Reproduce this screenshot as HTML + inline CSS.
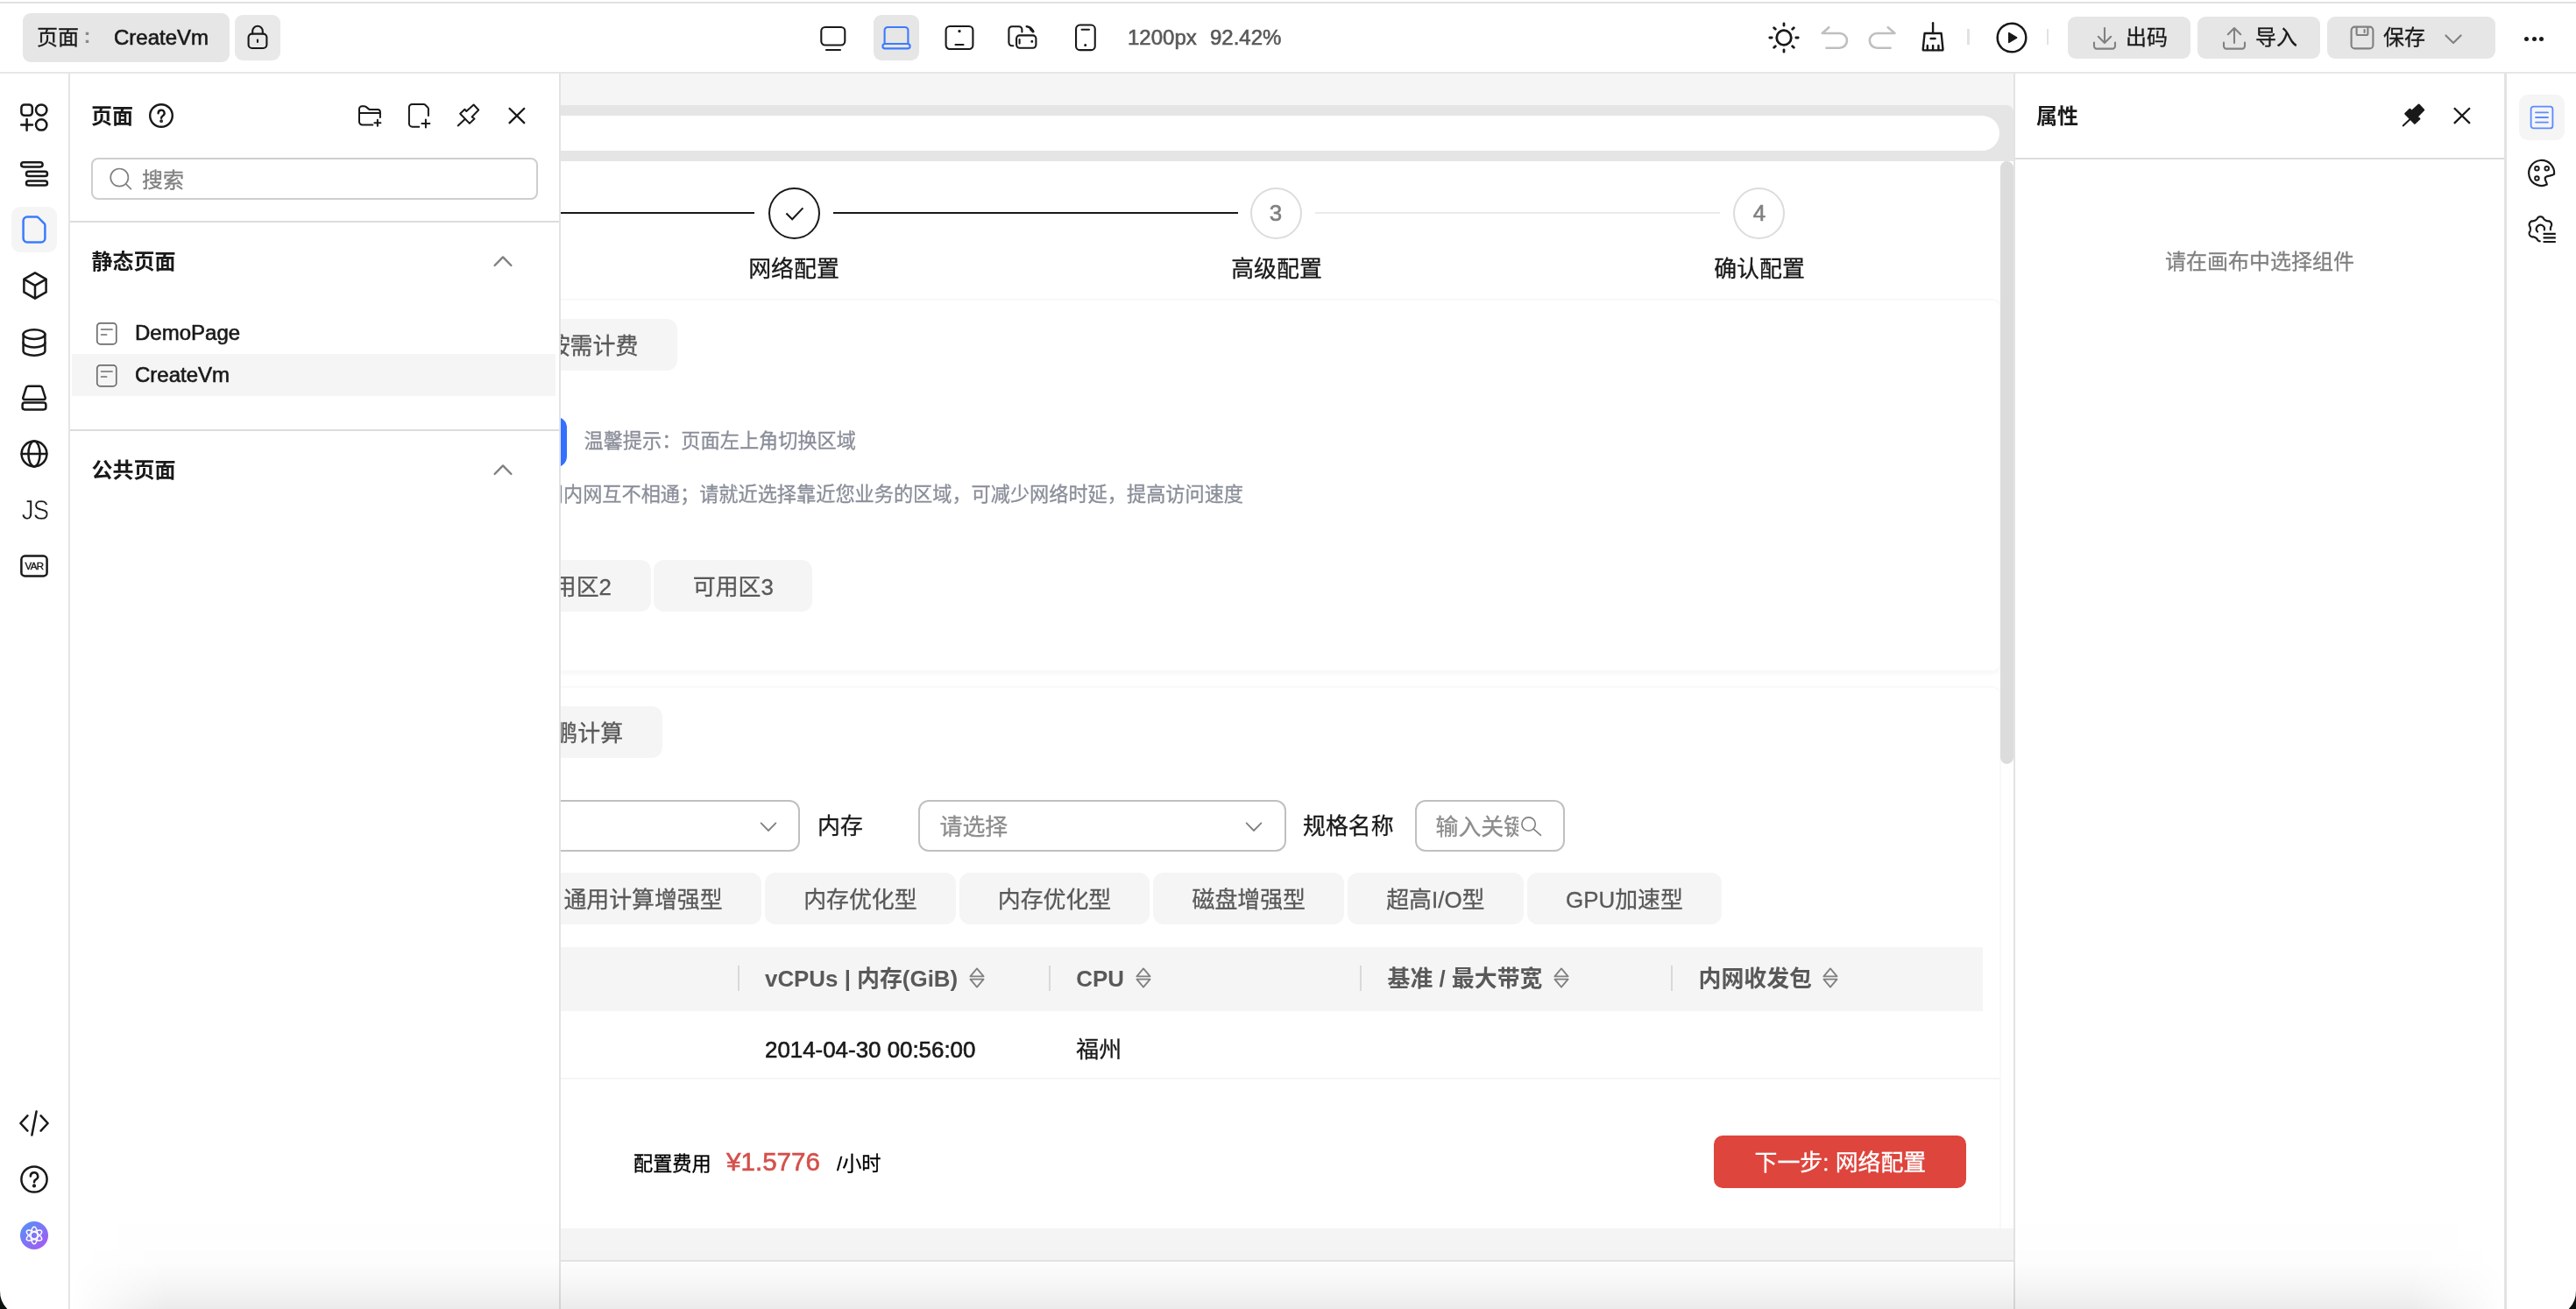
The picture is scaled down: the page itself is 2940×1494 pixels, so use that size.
<!DOCTYPE html>
<html lang="zh-CN">
<head>
<meta charset="utf-8">
<title>TinyEngine - CreateVm</title>
<style>
*{box-sizing:border-box;margin:0;padding:0}
html,body{width:2940px;height:1494px;overflow:hidden;background:#fff}
body{font-family:"Liberation Sans","Noto Sans CJK SC",sans-serif;color:#191919;position:relative;font-size:24px}
.a{position:absolute}
.t{position:absolute;white-space:nowrap;line-height:40px;height:40px}
svg{position:absolute;overflow:visible}
.ic{fill:none;stroke:#191919;stroke-width:2.1;stroke-linecap:round;stroke-linejoin:round}
.t,.gbtn{-webkit-text-stroke:0.3px currentColor}
.b,.th{font-weight:700;-webkit-text-stroke:0 currentColor}
.l{-webkit-text-stroke:0.6px currentColor}
/* toolbar */
#topline{left:0;top:2px;width:2940px;height:2px;background:#e0e1e0}
#tbline{left:0;top:82px;width:2940px;height:2px;background:#e6e6e6}
.tbtn{position:absolute;background:#e6e6e6;border-radius:9px}
/* rail */
#rail .ic{stroke-width:2.5}
#rail{left:0;top:84px;width:78px;height:1410px;background:#fff}
#railline{left:78px;top:84px;width:2px;height:1410px;background:#e5e5e5}
/* panel */
#panel{left:80px;top:84px;width:558px;height:1410px;background:#fff}
#panelline{left:638px;top:84px;width:2px;height:1410px;background:#e3e3e3}
.hl{position:absolute;height:2px;background:#dcdcdc}
/* canvas */
#canvas{left:640px;top:84px;width:1658px;height:1356px;background:#f5f5f5;overflow:hidden}
.cv{font-size:25.9px}
.gbtn{position:absolute;height:59px;background:#f5f5f5;border-radius:12px;color:#595959;font-size:25.9px;line-height:62px;text-align:center;white-space:nowrap}
.sel{position:absolute;height:59px;border:2px solid #c0c0c0;border-radius:12px;background:#fff}
.th{position:absolute;top:997px;height:73px;line-height:73px;font-weight:700;color:#595959;font-size:25.9px;white-space:nowrap}
.sep{position:absolute;top:1018px;width:2px;height:29px;background:#d9d9d9}
/* right */
#rpline{left:2298px;top:84px;width:2px;height:1410px;background:#e3e3e3}
#rpanel{left:2300px;top:84px;width:558px;height:1410px;background:#fff}
#rrline{left:2858px;top:84px;width:3px;height:1410px;background:#e3e3e3}
</style>
</head>
<body>
<div id="root" style="position:absolute;left:0;top:0;width:2940px;height:1494px;will-change:transform">
<!-- ===== canvas ===== -->
<div class="a" id="canvas">
<div class="a" style="left:0;top:36px;width:1658px;height:64px;background:#e5e5e5;border-top-right-radius:8px"></div>
<div class="a" style="left:-60px;top:48px;width:1702px;height:40px;background:#fff;border-radius:20px"></div>
<div class="a" style="left:0;top:100px;width:1658px;height:1218px;background:#fff"></div>
<div class="a" style="left:1643px;top:100px;width:14.800px;height:688px;border-radius:7.400px;background:#dcdcdc;z-index:3"></div>
<!-- steps -->
<div class="a" style="left:-60px;top:158px;width:281px;height:2px;background:#191919"></div>
<div class="a" style="left:237px;top:130px;width:59px;height:59px;border:2px solid #191919;border-radius:50%"></div>
<svg class="ic" style="left:255px;top:151px;stroke-width:2.100" width="24" height="18" viewBox="0 0 24 18"><path d="M2.400 8.600l6.800 6.600L21.400 2.400" stroke-linecap="butt" stroke-linejoin="miter"/></svg>
<div class="a" style="left:311px;top:158px;width:462px;height:2px;background:#191919"></div>
<div class="a" style="left:787.300px;top:129.500px;width:59px;height:59px;border:2px solid #dcdcdc;border-radius:50%"></div>
<div class="t cv l" style="left:786.500px;top:139px;width:59px;text-align:center;color:#808080">3</div>
<div class="a" style="left:861px;top:158px;width:462px;height:2px;background:#ebebeb"></div>
<div class="a" style="left:1337.700px;top:129.500px;width:59px;height:59px;border:2px solid #dcdcdc;border-radius:50%"></div>
<div class="t cv l" style="left:1338.500px;top:139px;width:59px;text-align:center;color:#808080">4</div>
<div class="t cv" style="left:166px;top:202.700px;width:200px;text-align:center">网络配置</div>
<div class="t cv" style="left:717px;top:202.700px;width:200px;text-align:center">高级配置</div>
<div class="t cv" style="left:1268px;top:202.700px;width:200px;text-align:center">确认配置</div>
<!-- card 1 -->
<div class="a" style="left:-60px;top:257px;width:1704px;height:426px;border:2px solid #f9f9f9;border-radius:10px;box-shadow:0 2px 4px rgba(0,0,0,0.030)"></div>
<div class="gbtn" style="left:-60px;top:280px;width:193px">按需计费</div>
<div class="a" style="left:-40px;top:392px;width:47px;height:57px;background:#3370ff;border-radius:12px"></div>
<div class="t" style="left:26.500px;top:399.500px;font-size:22.180px;color:#8a8e99">温馨提示：页面左上角切换区域</div>
<div class="t" style="right:879px;top:460.500px;font-size:22.180px;color:#8a8e99">不同区域的云服务产品之间内网互不相通；请就近选择靠近您业务的区域，可减少网络时延，提高访问速度</div>
<div class="gbtn" style="left:-78.500px;top:554.500px;width:181px">可用区2</div>
<div class="gbtn" style="left:106.400px;top:554.500px;width:181px">可用区3</div>
<!-- card 2 -->
<div class="a" style="left:-60px;top:699px;width:1704px;height:619px;border:2px solid #f9f9f9;border-bottom:none;border-radius:10px 10px 0 0"></div>
<div class="gbtn" style="left:-77px;top:722px;width:192.500px">鲲鹏计算</div>
<div class="sel" style="left:-150px;top:829px;width:423px"></div>
<svg class="ic" style="left:227px;top:853.600px;stroke:#808080;stroke-width:1.800" width="20" height="12" viewBox="0 0 20 12"><path d="M1.600 1.400L10 10l8.400-8.600"/></svg>
<div class="t cv" style="left:293px;top:839px">内存</div>
<div class="sel" style="left:408px;top:829px;width:419.500px"></div>
<div class="t cv" style="left:432.500px;top:840.200px;color:#8c8c8c">请选择</div>
<svg class="ic" style="left:781px;top:853.600px;stroke:#808080;stroke-width:1.800" width="20" height="12" viewBox="0 0 20 12"><path d="M1.600 1.400L10 10l8.400-8.600"/></svg>
<div class="t cv" style="left:847px;top:839px">规格名称</div>
<div class="sel" style="left:974.500px;top:829px;width:171px"></div>
<div class="t cv" style="left:998.500px;top:840.200px;width:94px;overflow:hidden;color:#8c8c8c">输入关键字</div>
<svg class="ic" style="left:1096px;top:846px;stroke:#808080;stroke-width:1.600" width="26" height="26" viewBox="0 0 26 26"><circle cx="8.600" cy="10.600" r="7.700"/><path d="M14.200 16.100l8.300 7.200"/></svg>
<!-- tabs -->
<div class="gbtn" style="left:-41px;top:911.500px;width:270px">通用计算增强型</div>
<div class="gbtn" style="left:233px;top:911.500px;width:217.800px">内存优化型</div>
<div class="gbtn" style="left:454.600px;top:911.500px;width:217.800px">内存优化型</div>
<div class="gbtn" style="left:676.400px;top:911.500px;width:217.800px">磁盘增强型</div>
<div class="gbtn" style="left:898px;top:911.500px;width:200.700px">超高I/O型</div>
<div class="gbtn" style="left:1102.600px;top:911.500px;width:222.700px">GPU加速型</div>
<!-- table -->
<div class="a" style="left:-60px;top:997px;width:1683px;height:73px;background:#f5f5f5"></div>
<div class="sep" style="left:202px"></div><div class="sep" style="left:557px"></div><div class="sep" style="left:912px"></div><div class="sep" style="left:1267px"></div>
<div class="th" style="left:233px">vCPUs | 内存(GiB)</div><svg style="left:465px;top:1020px" width="20" height="24" viewBox="0 0 20 24"><path d="M10 1.400L17.600 10.400H2.400z" fill="none" stroke="#808080" stroke-width="1.800" stroke-linejoin="round"/><path d="M10 22.600L17.600 13.600H2.400z" fill="none" stroke="#808080" stroke-width="1.800" stroke-linejoin="round"/></svg>
<div class="th" style="left:588.300px">CPU</div><svg style="left:654.5px;top:1020px" width="20" height="24" viewBox="0 0 20 24"><path d="M10 1.400L17.600 10.400H2.400z" fill="none" stroke="#808080" stroke-width="1.800" stroke-linejoin="round"/><path d="M10 22.600L17.600 13.600H2.400z" fill="none" stroke="#808080" stroke-width="1.800" stroke-linejoin="round"/></svg>
<div class="th" style="left:943.500px">基准 / 最大带宽</div><svg style="left:1131.5px;top:1020px" width="20" height="24" viewBox="0 0 20 24"><path d="M10 1.400L17.600 10.400H2.400z" fill="none" stroke="#808080" stroke-width="1.800" stroke-linejoin="round"/><path d="M10 22.600L17.600 13.600H2.400z" fill="none" stroke="#808080" stroke-width="1.800" stroke-linejoin="round"/></svg>
<div class="th" style="left:1298.500px">内网收发包</div><svg style="left:1439px;top:1020px" width="20" height="24" viewBox="0 0 20 24"><path d="M10 1.400L17.600 10.400H2.400z" fill="none" stroke="#808080" stroke-width="1.800" stroke-linejoin="round"/><path d="M10 22.600L17.600 13.600H2.400z" fill="none" stroke="#808080" stroke-width="1.800" stroke-linejoin="round"/></svg>
<div class="t cv l" style="left:233px;top:1094px">2014-04-30 00:56:00</div>
<div class="t cv" style="left:588.300px;top:1094px">福州</div>
<div class="a" style="left:-60px;top:1146px;width:1702px;height:2px;background:#f5f5f5"></div>
<!-- footer -->
<div class="t" style="left:83px;top:1225.200px;font-size:22.180px;color:#000">配置费用</div>
<div class="t l" style="left:189px;top:1222px;font-size:29.600px;color:#d4504b">¥1.5776</div>
<div class="t" style="left:315px;top:1225.200px;font-size:22.180px;color:#000">/小时</div>
<div class="a" style="left:1316.300px;top:1212.300px;width:288.200px;height:59.400px;border-radius:10px;background:#de453d"></div>
<div class="t cv" style="left:1316.300px;top:1223.300px;width:288.200px;text-align:center;color:#fff">下一步: 网络配置</div>
<div class="a" style="left:0;top:1354px;width:1658px;height:2px;background:#e4e4e4"></div>
</div>

<!-- ===== toolbar ===== -->
<div class="a" id="toolbar" style="left:0;top:0;width:2940px;height:82px;background:#fff">
<div class="tbtn" style="left:26px;top:15px;width:236px;height:56px"></div>
<div class="t" style="left:42px;top:23px">页面</div>
<div class="t b" style="left:95.500px;top:21px;color:#8a8a8a">:</div>
<div class="t l" style="left:130px;top:23px">CreateVm</div>
<div class="tbtn" style="left:268px;top:17px;width:52px;height:52px;background:#e9e9e9"></div>
<svg class="ic" style="left:281px;top:27px" width="26" height="30" viewBox="0 0 26 30"><rect x="2.6" y="11.6" width="20.8" height="16.4" rx="4"/><path d="M7.2 11.4V8.6a5.8 5.8 0 0 1 11.6 0v2.8"/><path d="M13 18.6v2.4"/></svg>
<!-- device icons -->
<svg class="ic" style="left:934px;top:27px" width="34" height="34" viewBox="0 0 34 34"><rect x="3.3" y="4" width="27" height="20.5" rx="4.5"/><path d="M9 30h16"/></svg>
<div class="tbtn" style="left:997px;top:17px;width:52px;height:52px"></div>
<svg class="ic" style="left:1006px;top:27px;stroke:#3b7bff" width="34" height="34" viewBox="0 0 34 34"><path d="M3.6 23V7.6a3.6 3.6 0 0 1 3.6-3.6h19.6a3.6 3.6 0 0 1 3.6 3.6V23"/><rect x="1.4" y="23" width="31.2" height="5.4" rx="2.7"/></svg>
<svg class="ic" style="left:1078px;top:27px" width="34" height="34" viewBox="0 0 34 34"><rect x="1.6" y="3" width="30.8" height="26" rx="4.5"/><path d="M12.5 24h9"/><circle cx="17" cy="8.6" r="1" fill="#191919" stroke-width="1.4"/></svg>
<svg class="ic" style="left:1150px;top:27px" width="36" height="34" viewBox="0 0 36 34"><path d="M6.400 25.200H5a3.600 3.600 0 0 1-3.600-3.600V6.800A3.600 3.600 0 0 1 5 3.200h7.800a3.600 3.600 0 0 1 3.600 3.600V9.400"/><rect x="10.100" y="13.400" width="22.300" height="14.300" rx="3.600"/><path d="M21.800 3.200a9 9 0 0 1 7 5.200" stroke-width="2.600"/><path d="M26.600 6.400l2.400 2.400" stroke-width="3.200"/><path d="M13.600 18v4.600"/><circle cx="27.800" cy="20.300" r="0.900" fill="#191919" stroke-width="1.200"/></svg>
<svg class="ic" style="left:1222px;top:26px" width="34" height="36" viewBox="0 0 34 36"><rect x="6.050" y="2.550" width="21.700" height="28.600" rx="4.500"/><path d="M12.600 7.800h8.400"/><circle cx="16.700" cy="25.500" r="0.900" fill="#191919" stroke-width="1.200"/></svg>
<div class="t l" style="left:1287px;top:23px;color:#595959">1200px</div>
<div class="t l" style="left:1381px;top:23px;color:#595959">92.42%</div>
<!-- right tools -->
<svg class="ic" style="left:2017px;top:24px;stroke-width:2.800" width="38" height="38" viewBox="0 0 38 38"><circle cx="19" cy="19" r="8.300"/><path d="M19 2.800v2.400M19 32.800v2.400M2.800 19h2.400M32.800 19h2.400M7.700 7.700l1.600 1.600M28.700 28.700l1.600 1.600M7.700 30.300l1.600-1.600M28.700 9.300l1.600-1.600"/></svg>
<svg class="ic" style="left:2077px;top:28px;stroke:#bfbfbf;stroke-width:2.600" width="34" height="30" viewBox="0 0 34 30"><path d="M10.300 3.200L2.700 10H22.600a8.350 8.350 0 0 1 0 16.700H7.500"/></svg>
<svg class="ic" style="left:2131px;top:28px;stroke:#bfbfbf;stroke-width:2.600" width="34" height="30" viewBox="0 0 34 30"><path d="M23.800 3.200L31.500 10H11.200a8.350 8.350 0 0 0 0 16.700H26.600"/></svg>
<svg class="ic" style="left:2191px;top:25px;stroke-width:2.400" width="30" height="36" viewBox="0 0 30 36"><path d="M15.100 1.200V13"/><path d="M5.600 13h19l1.900 18.400a0.900 0.900 0 0 1-0.900 1H4.600a0.900 0.900 0 0 1-0.900-1z"/><path d="M12.600 19h5"/><path d="M8.800 32v-5M15.100 32v-5M21.400 32v-5"/></svg>
<div class="a" style="left:2245px;top:33px;width:2.500px;height:18px;background:#e2e2e2"></div>
<svg class="ic" style="left:2277px;top:24px" width="38" height="38" viewBox="0 0 38 38"><circle cx="19" cy="19" r="16.300" stroke-width="2.500"/><path d="M15.800 13.600v10.800l8.800-5.400z" fill="#191919" stroke-width="1.600"/></svg>
<div class="a" style="left:2335.500px;top:33px;width:2.500px;height:18px;background:#e2e2e2"></div>
<div class="tbtn" style="left:2360px;top:19px;width:140px;height:48px"></div>
<svg class="ic" style="left:2388px;top:30px;stroke:#808080" width="28" height="28" viewBox="0 0 28 28"><path d="M14 2v16.600M6.800 11.800L14 19l7.200-7.200"/><path d="M2 18.600v4a3 3 0 0 0 3 3h18a3 3 0 0 0 3-3v-4"/></svg>
<div class="t" style="left:2426px;top:23px">出码</div>
<div class="tbtn" style="left:2508px;top:19px;width:140px;height:48px"></div>
<svg class="ic" style="left:2536px;top:30px;stroke:#808080" width="28" height="28" viewBox="0 0 28 28"><path d="M14 19V2.400M6.800 9.200L14 2l7.200 7.200"/><path d="M2 18.600v4a3 3 0 0 0 3 3h18a3 3 0 0 0 3-3v-4"/></svg>
<div class="t" style="left:2574px;top:23px">导入</div>
<div class="tbtn" style="left:2656px;top:19px;width:192px;height:48px"></div>
<svg class="ic" style="left:2682px;top:29px;stroke:#808080" width="28" height="28" viewBox="0 0 28 28"><rect x="1.600" y="1.600" width="24.800" height="24.800" rx="4"/><path d="M7.600 2v7.400a1.600 1.600 0 0 0 1.600 1.600h9.600a1.600 1.600 0 0 0 1.600-1.600V2"/><path d="M16.600 5v3"/></svg>
<div class="t" style="left:2720px;top:23px">保存</div>
<svg class="ic" style="left:2790px;top:39px;stroke:#808080" width="20" height="12" viewBox="0 0 20 12"><path d="M1.400 1.400L10 10l8.600-8.600"/></svg>
<div class="a" style="left:2881px;top:42px;width:5px;height:5px;border-radius:3px;background:#191919"></div>
<div class="a" style="left:2889.500px;top:42px;width:5px;height:5px;border-radius:3px;background:#191919"></div>
<div class="a" style="left:2898px;top:42px;width:5px;height:5px;border-radius:3px;background:#191919"></div>
</div>
<div class="a" id="topline"></div>
<div class="a" id="tbline"></div>

<!-- ===== left rail ===== -->
<div class="a" id="rail">
<!-- coordinates relative to rail top (84) -->
<svg class="ic" style="left:22px;top:33px" width="34" height="34" viewBox="0 0 34 34"><rect x="2.400" y="2.400" width="12.400" height="12.400" rx="3.600"/><circle cx="25.200" cy="8.600" r="6.200"/><circle cx="25.200" cy="25.400" r="6.200"/><path d="M8.600 19v12.800M2.200 25.400h12.800"/></svg>
<svg class="ic" style="left:22px;top:98px" width="34" height="32" viewBox="0 0 34 32"><rect x="2.200" y="3.200" width="24.400" height="5.200" rx="2.600"/><rect x="8" y="13.800" width="24" height="5.200" rx="2.600"/><rect x="8" y="24.400" width="24" height="5.200" rx="2.600"/></svg>
<div class="a" style="left:13px;top:152px;width:52px;height:52px;border-radius:10px;background:#f5f5f5"></div>
<svg class="ic" style="left:24px;top:161px;stroke:#3b7bff" width="30" height="34" viewBox="0 0 30 34"><path d="M7 2.600h10.800a3 3 0 0 1 2.100 0.900l6.600 6.600a3 3 0 0 1 0.900 2.100V27a4.400 4.400 0 0 1-4.400 4.400H7A4.400 4.400 0 0 1 2.600 27V7A4.400 4.400 0 0 1 7 2.600z"/></svg>
<svg class="ic" style="left:24px;top:225px" width="32" height="34" viewBox="0 0 32 34"><path d="M16 2.400l12.600 7.200v14.800L16 31.600 3.400 24.400V9.600z"/><path d="M3.800 9.800L16 16.800l12.200-7M16 16.800v14.400"/></svg>
<svg class="ic" style="left:24px;top:290px" width="30" height="34" viewBox="0 0 30 34"><ellipse cx="15" cy="7.600" rx="12.400" ry="5.400"/><path d="M2.600 7.600v18.800c0 3 5.600 5.400 12.400 5.400s12.400-2.400 12.400-5.400V7.600"/><path d="M2.600 17c0 3 5.600 5.400 12.400 5.400s12.400-2.400 12.400-5.400"/></svg>
<svg class="ic" style="left:23px;top:354px" width="32" height="32" viewBox="0 0 32 32"><path d="M9.200 2.800h13.600a2.400 2.400 0 0 1 2.300 1.700l3.600 11.300a1.600 1.600 0 0 1-1.500 2.100H4.800a1.600 1.600 0 0 1-1.500-2.100L6.900 4.500a2.400 2.400 0 0 1 2.300-1.700z"/><rect x="2.600" y="21.600" width="26.800" height="7.800" rx="2.600"/></svg>
<svg class="ic" style="left:22px;top:417px" width="34" height="34" viewBox="0 0 34 34"><circle cx="17" cy="17" r="14.400"/><ellipse cx="17" cy="17" rx="6.600" ry="14.400"/><path d="M2.600 17h28.800"/></svg>
<div class="t" style="left:21px;top:478px;font-size:32px;font-weight:400;letter-spacing:-1px;width:38px;text-align:center;transform:scaleX(0.860);-webkit-text-stroke:0.600px #fff">JS</div>
<svg class="ic" style="left:22px;top:548px" width="34" height="28" viewBox="0 0 34 28"><rect x="2.400" y="2.600" width="29.200" height="22.800" rx="4"/></svg>
<div class="t b" style="left:22px;top:542px;width:34px;text-align:center;font-size:11.500px;letter-spacing:-0.600px;font-weight:400;-webkit-text-stroke:0.400px #191919">VAR</div>
<svg class="ic" style="left:21px;top:1182px" width="36" height="32" viewBox="0 0 36 32"><path d="M10.400 7.400L2.400 16l8 8.600M25.600 7.400l8 8.600-8 8.600M20.600 2.400l-5.200 27.200"/></svg>
<svg class="ic" style="left:22px;top:1245px" width="34" height="34" viewBox="0 0 34 34"><circle cx="17" cy="17" r="14.600"/><path d="M12.800 13.400a4.200 4.200 0 1 1 6.200 3.700c-1.400 0.800-2 1.500-2 3.100"/><circle cx="17" cy="24.400" r="0.800" fill="#191919"/></svg>
<svg style="left:23px;top:1310px" width="32" height="32" viewBox="0 0 32 32"><defs><linearGradient id="aig" x1="0.150" y1="0.100" x2="0.850" y2="0.900"><stop offset="0" stop-color="#5a8df8"/><stop offset="1" stop-color="#a35cf3"/></linearGradient></defs><circle cx="16" cy="16" r="16" fill="url(#aig)"/><g fill="none" stroke="#fff" stroke-width="1.500"><ellipse cx="16" cy="16" rx="3.800" ry="9.800"/><ellipse cx="16" cy="16" rx="3.800" ry="9.800" transform="rotate(60 16 16)"/><ellipse cx="16" cy="16" rx="3.800" ry="9.800" transform="rotate(120 16 16)"/></g></svg>
</div>
<div class="a" id="railline"></div>

<!-- ===== pages panel ===== -->
<div class="a" id="panel">
<div class="t b" style="left:24px;top:28.500px">页面</div>
<svg class="ic" style="left:89px;top:33px;stroke-width:2.400" width="30" height="30" viewBox="0 0 30 30"><circle cx="15" cy="15" r="12.800"/><path d="M11.600 12.200a3.500 3.500 0 1 1 5.200 3c-1.200 0.700-1.700 1.300-1.700 2.600"/><circle cx="15.100" cy="21.200" r="0.700" fill="#191919"/></svg>
<svg class="ic" style="left:328px;top:34px;stroke-width:2" width="30" height="28" viewBox="0 0 30 28"><path d="M17.300 24.600H5.600A3.600 3.600 0 0 1 2 21V6.400a3.200 3.200 0 0 1 3.200-3.200h2.600a3 3 0 0 1 1.900 0.700l3.400 2.700a2.400 2.400 0 0 0 1.500 0.500h8.500a2.800 2.800 0 0 1 2.800 2.800V16"/><path d="M2.200 10.900h23.600"/><path d="M22.900 18.700v7M19.400 22.200h7"/></svg>
<svg class="ic" style="left:385px;top:33px;stroke-width:2" width="28" height="30" viewBox="0 0 28 30"><path d="M13.300 27.700H5.500a3.600 3.600 0 0 1-3.600-3.600V5.500a3.600 3.600 0 0 1 3.600-3.600h13.200a2 2 0 0 1 1.400 0.600l3.200 3.200a2 2 0 0 1 0.600 1.400V14.900"/><path d="M20.900 19.400v9M16.400 23.900h9"/></svg>
<svg class="ic" style="left:441px;top:34px;stroke-width:2" width="28" height="28" viewBox="0 0 28 28"><path d="M1.700 25.400l7.700-7.200"/><path d="M4.200 11.800L9.400 6.700 11.300 9 19.600 1.500 25.200 7.500 17.600 15.400 20.500 17.500 14.900 22.900z"/></svg>
<svg class="ic" style="left:499px;top:37px;stroke-width:2.300" width="22" height="22" viewBox="0 0 22 22"><path d="M1.900 2.200l18 17.700M19.900 2.200L1.900 19.900" stroke-linecap="butt"/></svg>
<div class="a" style="left:24px;top:96px;width:510px;height:48px;border:2px solid #cecece;border-radius:8px"></div>
<svg class="ic" style="left:44px;top:106px;stroke:#808080;stroke-width:1.700" width="28" height="28" viewBox="0 0 28 28"><circle cx="12.300" cy="12.600" r="10.100"/><path d="M19.600 19.900l5.800 5.800"/></svg>
<div class="t" style="left:82px;top:102.300px;color:#808080">搜索</div>
<div class="hl" style="left:0;top:168px;width:558px"></div>
<div class="t b" style="left:24.500px;top:194.500px">静态页面</div>
<svg class="ic" style="left:483px;top:207px;stroke:#808080;stroke-width:2.400" width="22" height="14" viewBox="0 0 22 14"><path d="M1.600 12L11 2.400 20.400 12"/></svg>
<svg class="ic" style="left:29px;top:283px;stroke:#6e6e6e;stroke-width:1.700" width="26" height="28" viewBox="0 0 26 28"><rect x="1.800" y="1.800" width="22" height="24" rx="3.600"/><path d="M6.600 9h12.400M6.600 15h6"/></svg>
<div class="t l" style="left:74px;top:276px">DemoPage</div>
<div class="a" style="left:2px;top:320px;width:552px;height:48px;background:#f5f5f5"></div>
<svg class="ic" style="left:29px;top:331px;stroke:#6e6e6e;stroke-width:1.700" width="26" height="28" viewBox="0 0 26 28"><rect x="1.800" y="1.800" width="22" height="24" rx="3.600"/><path d="M6.600 9h12.400M6.600 15h6"/></svg>
<div class="t l" style="left:74px;top:324px">CreateVm</div>
<div class="hl" style="left:0;top:406px;width:558px"></div>
<div class="t b" style="left:24.500px;top:432.500px">公共页面</div>
<svg class="ic" style="left:483px;top:445px;stroke:#808080;stroke-width:2.400" width="22" height="14" viewBox="0 0 22 14"><path d="M1.600 12L11 2.400 20.400 12"/></svg>
</div>
<div class="a" id="panelline"></div>

<!-- ===== right panel ===== -->
<div class="a" id="rpline"></div>
<div class="a" id="rpanel">
<div class="t b" style="left:24px;top:29px">属性</div>
<svg style="left:441px;top:34px" width="28" height="28" viewBox="0 0 28 28"><path d="M1.700 25.400l7.700-7.200" fill="none" stroke="#191919" stroke-width="2" stroke-linecap="round"/><path d="M4.200 11.800L9.400 6.700 11.300 9 19.600 1.500 25.200 7.500 17.600 15.400 20.500 17.500 14.900 22.900z" fill="#191919" stroke="#191919" stroke-width="2" stroke-linejoin="round"/></svg>
<svg class="ic" style="left:499px;top:37px;stroke-width:2.300" width="22" height="22" viewBox="0 0 22 22"><path d="M1.900 2.200l18 17.700M19.900 2.200L1.900 19.900" stroke-linecap="butt"/></svg>
<div class="hl" style="left:0;top:96px;width:558px"></div>
<div class="t" style="left:0;top:195px;width:558px;text-align:center;color:#808080">请在画布中选择组件</div>
</div>
<div class="a" id="rrline"></div>
<div class="a" id="rrail" style="left:2861px;top:84px;width:79px;height:1410px;background:#fff">
<div class="a" style="left:14px;top:24px;width:52px;height:52px;border-radius:10px;background:#f5f5f5"></div>
<svg class="ic" style="left:26px;top:36px;stroke:#5b8cff;stroke-width:1.800" width="28" height="28" viewBox="0 0 28 28"><rect x="1.600" y="1.600" width="24.800" height="24.800" rx="3"/><path d="M7 8.400h14M7 14h14M7 19.600h14"/></svg>
<svg class="ic" style="left:23px;top:97px;stroke-width:2.200" width="34" height="34" viewBox="0 0 34 34"><path d="M22.800 29.600A14.500 14.500 0 1 1 31.100 17.800C28.500 20.300 23.500 18.800 21.200 21.200C19.200 23.500 22.600 26 22.800 29.600z"/><circle cx="11.400" cy="11.300" r="2.300" stroke-width="1.900"/><circle cx="22.700" cy="11.300" r="2.300" stroke-width="1.900"/><circle cx="11.400" cy="22.500" r="2.300" stroke-width="1.900"/></svg>
<svg class="ic" style="left:23px;top:160px;stroke-width:2.200" width="36" height="34" viewBox="0 0 36 34"><path d="M14.67 31.29 L14.31 31.21 L13.95 31.09 L13.60 30.95 L13.27 30.78 L12.94 30.57 L12.63 30.33 L12.34 30.04 L12.10 29.62 L11.88 29.18 L11.64 28.88 L11.39 28.61 L11.15 28.37 L10.91 28.14 L10.67 27.92 L10.43 27.73 L10.18 27.54 L9.93 27.37 L9.68 27.22 L9.41 27.07 L9.14 26.94 L8.86 26.82 L8.56 26.71 L8.26 26.61 L7.94 26.51 L7.61 26.43 L7.25 26.35 L6.87 26.29 L6.38 26.32 L5.89 26.32 L5.50 26.21 L5.14 26.07 L4.79 25.89 L4.48 25.68 L4.18 25.45 L3.90 25.20 L3.65 24.93 L3.43 24.64 L3.23 24.33 L3.06 24.00 L2.92 23.66 L2.81 23.31 L2.73 22.94 L2.68 22.57 L2.66 22.19 L2.68 21.81 L2.73 21.42 L2.83 21.02 L3.08 20.60 L3.35 20.19 L3.49 19.83 L3.60 19.49 L3.69 19.15 L3.77 18.83 L3.83 18.52 L3.88 18.21 L3.92 17.90 L3.94 17.60 L3.95 17.30 L3.94 17.00 L3.92 16.70 L3.88 16.39 L3.83 16.08 L3.77 15.77 L3.69 15.45 L3.60 15.11 L3.49 14.77 L3.35 14.41 L3.08 14.00 L2.83 13.58 L2.73 13.18 L2.68 12.79 L2.66 12.41 L2.68 12.03 L2.73 11.66 L2.81 11.29 L2.92 10.94 L3.06 10.60 L3.23 10.28 L3.43 9.96 L3.65 9.67 L3.90 9.40 L4.18 9.15 L4.48 8.92 L4.79 8.71 L5.14 8.53 L5.50 8.39 L5.89 8.28 L6.38 8.28 L6.87 8.31 L7.25 8.25 L7.61 8.17 L7.94 8.09 L8.26 7.99 L8.56 7.89 L8.86 7.78 L9.14 7.66 L9.41 7.53 L9.68 7.38 L9.93 7.23 L10.18 7.06 L10.43 6.87 L10.67 6.68 L10.91 6.46 L11.15 6.23 L11.39 5.99 L11.64 5.72 L11.88 5.42 L12.10 4.98 L12.34 4.56 L12.63 4.27 L12.94 4.03 L13.27 3.82 L13.60 3.65 L13.95 3.51 L14.31 3.39 L14.67 3.31 L15.03 3.27 L15.40 3.25 L15.77 3.27 L16.13 3.31 L16.49 3.39 L16.85 3.51 L17.20 3.65 L17.53 3.82 L17.86 4.03 L18.17 4.27 L18.46 4.56 L18.70 4.98 L18.92 5.42 L19.16 5.72 L19.41 5.99 L19.65 6.23 L19.89 6.46 L20.13 6.68 L20.37 6.87 L20.62 7.06 L20.87 7.23 L21.13 7.38 L21.39 7.53 L21.66 7.66 L21.94 7.78 L22.24 7.89 L22.54 7.99 L22.86 8.09 L23.19 8.17 L23.55 8.25 L23.93 8.31 L24.42 8.28 L24.91 8.28 L25.30 8.39 L25.66 8.53 L26.01 8.71 L26.32 8.92 L26.62 9.15 L26.90 9.40 L27.15 9.67 L27.37 9.96 L27.57 10.28 L27.74 10.60 L27.88 10.94 L27.99 11.29 L28.07 11.66 L28.12 12.03 L28.14 12.41 L28.12 12.79 L28.07 13.18 L27.97 13.58 L27.72 14.00 L27.45 14.41 L27.31 14.77 L27.20 15.11 L27.11 15.45 L27.03 15.77 L26.97 16.08 L26.92 16.39 L26.88 16.70 L26.86 17.00 L26.85 17.30 L26.86 17.60 L26.88 17.90 L26.92 18.21"/><path d="M19.84 18.49A4.6 4.6 0 1 0 12.15 20.55"/><path d="M18.6 22.8H32.8M18.6 27.4H32.8M18.6 32.0H32.8" stroke-linecap="butt"/></svg></div>

<!-- ===== bottom shadow + window corners ===== -->
<div class="a" style="left:640px;top:1440px;width:1658px;height:54px;background:#fff"></div>
<div class="a" style="left:80px;top:1380px;width:2780px;height:114px;background:linear-gradient(to bottom,rgba(0,0,0,0) 0%,rgba(0,0,0,0.003) 30%,rgba(0,0,0,0.008) 53%,rgba(0,0,0,0.027) 70%,rgba(0,0,0,0.055) 88%,rgba(0,0,0,0.080) 100%);-webkit-mask-image:linear-gradient(to right,transparent 0,#000 110px,#000 2670px,transparent 2780px);mask-image:linear-gradient(to right,transparent 0,#000 110px,#000 2670px,transparent 2780px);pointer-events:none"></div>
<svg style="left:0;top:1470px" width="24" height="24" viewBox="0 0 24 24"><path d="M0 3V24H8.300A29 29 0 0 1 0 3z" fill="#0c120f"/></svg>
<svg style="left:2916px;top:1470px" width="24" height="24" viewBox="0 0 24 24"><path d="M24 3V24H15.700A29 29 0 0 0 24 3z" fill="#0c120f"/></svg>
</div>
</body>
</html>
